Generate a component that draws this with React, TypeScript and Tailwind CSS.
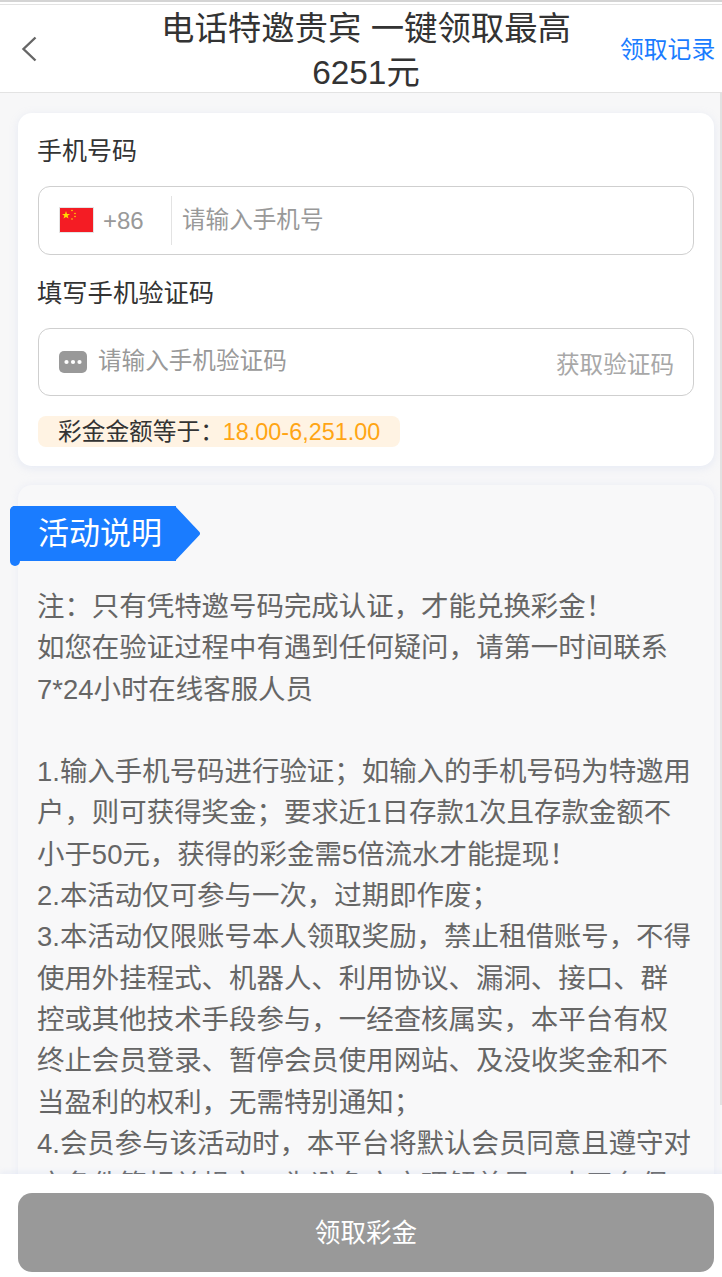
const font = { fontFamily: '"Liberation Sans","Noto Sans CJK SC",sans-serif' };

const lines = [
  "注：只有凭特邀号码完成认证，才能兑换彩金！",
  "如您在验证过程中有遇到任何疑问，请第一时间联系",
  "7*24小时在线客服人员",
  "",
  "1.输入手机号码进行验证；如输入的手机号码为特邀用",
  "户，则可获得奖金；要求近1日存款1次且存款金额不",
  "小于50元，获得的彩金需5倍流水才能提现！",
  "2.本活动仅可参与一次，过期即作废；",
  "3.本活动仅限账号本人领取奖励，禁止租借账号，不得",
  "使用外挂程式、机器人、利用协议、漏洞、接口、群",
  "控或其他技术手段参与，一经查核属实，本平台有权",
  "终止会员登录、暂停会员使用网站、及没收奖金和不",
  "当盈利的权利，无需特别通知；",
  "4.会员参与该活动时，本平台将默认会员同意且遵守对",
  "应条件等相关规定，为避免文字理解差异，本平台保",
];

function Flag() {
  return (
    <svg width="35" height="26" viewBox="0 0 35 26" className="mt-[-2px] shrink-0">
      <rect x="0.5" y="0.5" width="34" height="25" fill="#f41c24" stroke="#e4e4e4" />
      <polygon points="7,4 8,7 11,7 8.6,8.8 9.5,11.6 7,10 4.5,11.6 5.4,8.8 3,7 6,7" fill="#ffdc00" />
      <circle cx="13" cy="3.5" r="0.8" fill="#ffdc00" />
      <circle cx="16" cy="6.5" r="0.8" fill="#ffdc00" />
      <circle cx="16" cy="9.5" r="0.8" fill="#ffdc00" />
      <circle cx="13" cy="12" r="0.8" fill="#ffdc00" />
    </svg>
  );
}

function Dots() {
  return (
    <svg width="28" height="22" viewBox="0 0 28 22" className="shrink-0">
      <rect x="0" y="0" width="28" height="22" rx="5" fill="#999999" />
      <circle cx="7.5" cy="11" r="2.1" fill="#fff" />
      <circle cx="14" cy="11" r="2.1" fill="#fff" />
      <circle cx="20.5" cy="11" r="2.1" fill="#fff" />
    </svg>
  );
}

export default function App() {
  return (
    <div style={font} className="relative h-[1277px] w-[722px] overflow-hidden bg-[#f7f7f8]">
      <div className="w-[732px]">
        <div className="h-[4px] border-t-2 border-[#d4d4d4] bg-white" />
        <header className="flex h-[89px] items-center border-y border-[#e3e3e3] bg-white">
          <div className="flex w-[60px] shrink-0 justify-center">
            <svg width="16" height="26" viewBox="0 0 16 26" className="mr-[2px]">
              <path d="M14.5 1.5 L2.5 13 L14.5 24.5" fill="none" stroke="#666666" strokeWidth="2.4" />
            </svg>
          </div>
          <h1 className="mt-[4px] h-[88px] w-[560px] shrink-0 pl-[70px] pr-[18px] text-center text-[33.4px] font-normal leading-[44px] text-[#333333]">
            电话特邀贵宾 一键领取最高6251元
          </h1>
          <a className="mt-[2px] whitespace-nowrap text-[23.8px] text-[#1a7cff]">领取记录</a>
        </header>

        <main className="px-[18px] pt-[20px]">
          <section className="h-[353px] rounded-[14px] bg-white px-[20px] pt-[20px] shadow-[0_2px_8px_rgba(180,195,235,0.25)]">
            <div className="-ml-px text-[25px] leading-[36px] text-[#333333]">手机号码</div>
            <div className="mt-[17px] flex h-[69px] items-center rounded-[12px] border border-[#cfcfcf] pl-[20px]">
              <Flag />
              <span className="ml-[9px] w-[68px] text-[24px] text-[#999999]">+86</span>
              <span className="h-[49px] w-px bg-[#e3e3e3]" />
              <span className="ml-[10px] text-[23.6px] text-[#999999]">请输入手机号</span>
            </div>
            <div className="-ml-px mt-[20px] text-[25.3px] leading-[36px] text-[#333333]">填写手机验证码</div>
            <div className="mt-[17px] flex h-[68px] items-center justify-between rounded-[12px] border border-[#cfcfcf] pl-[20px] pr-[19px]">
              <div className="flex items-center">
                <Dots />
                <span className="ml-[11px] text-[23.6px] text-[#999999]">请输入手机验证码</span>
              </div>
              <span className="mt-[7px] text-[23.6px] text-[#a8a8a8]">获取验证码</span>
            </div>
            <div className="mt-[20px] flex h-[31px] w-[362px] items-center rounded-[8px] bg-[#fff3e3] pl-[20px] pt-[2px] text-[23.7px]">
              <span className="text-[#333333]">彩金金额等于：</span>
              <span className="-ml-px text-[23.4px] text-[#ffa514]">18.00-6,251.00</span>
            </div>
          </section>

          <section className="relative mt-[19px] h-[800px] rounded-[14px] bg-[#f8f8f9] pl-[20px] pr-[14px] pt-[21px] shadow-[0_0_8px_rgba(190,200,240,0.2)]">
            <div className="absolute left-[-8px] top-[21px] h-[60px] w-[10px] rounded-[5px] bg-[#1a7cff]" />
            <div className="relative -ml-[28px] flex w-max items-center">
              <div className="flex h-[55px] w-[166px] items-center rounded-tl-[5px] bg-[#1a7cff] pl-[28px] text-[31px] leading-none text-white">
                活动说明
              </div>
              <svg width="26" height="55" viewBox="0 0 26 55" className="-ml-px shrink-0">
                <path d="M0 0 L24.5 26 Q25.6 27.5 24.5 29 L0 55 Z" fill="#1a7cff" />
              </svg>
            </div>
            <div className="-ml-px mt-[25px] whitespace-nowrap text-[27.45px] text-[#666666]">
              {lines.map((l, i) => (
                <div key={i} className="h-[41.3px] leading-[41.3px]">{l}</div>
              ))}
            </div>
          </section>
        </main>
      </div>

      <div className="absolute left-[720px] top-[93px] h-[1012px] w-[2px] bg-[#e2e2e2]" />

      <footer className="absolute bottom-0 left-0 flex h-[103px] w-[732px] items-start bg-white px-[18px] pt-[19px] shadow-[0_-2px_6px_rgba(180,195,235,0.2)]">
        <button className="h-[79px] w-full rounded-[14px] bg-[#999999] pt-[2px] text-[25.6px] text-white">领取彩金</button>
      </footer>
    </div>
  );
}
